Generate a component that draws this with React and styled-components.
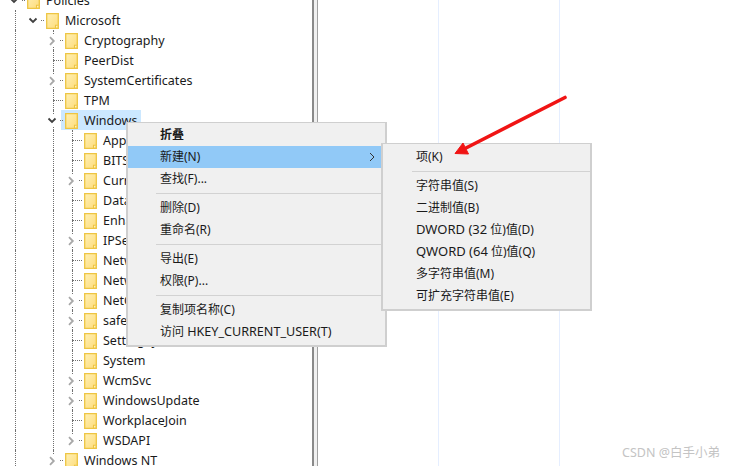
import React from 'react';
import styled, { createGlobalStyle } from 'styled-components';

const Global = createGlobalStyle`
  html, body { margin: 0; padding: 0; background: #fff; }
  body { font-family: "Noto Sans", "Noto Sans CJK SC", sans-serif; }
`;

const Page = styled.div`
  position: relative;
  width: 732px;
  height: 466px;
  overflow: hidden;
  display: flex;
  background: #fff;
`;

const TreePane = styled.div`
  width: 312px;
  flex: none;
  margin-top: -10px;
  padding-left: 15px;
  box-sizing: border-box;
`;

const Row = styled.div`
  display: flex;
  align-items: center;
  height: 20px;
`;

const Guide = styled.div`
  width: 19px;
  height: 100%;
  flex: none;
  box-sizing: border-box;
  border-left: ${p => (p.$on ? '1px dotted #707070' : 'none')};
`;

const Connector = styled.div`
  position: relative;
  width: 12px;
  height: 100%;
  flex: none;
  &::before {
    content: '';
    display: ${p => (p.$line ? 'block' : 'none')};
    position: absolute;
    left: 0;
    top: 0;
    bottom: ${p => (p.$end ? '10px' : '0')};
    border-left: 1px dotted #707070;
  }
  &::after {
    content: '';
    position: absolute;
    left: 0;
    right: 2px;
    top: 10px;
    border-top: 1px dotted #707070;
  }
`;

const Toggle = styled.svg`
  position: absolute;
  left: -6px;
  top: 4px;
  width: 12px;
  height: 12px;
  z-index: 1;
  background: #fff;
`;

const Item = styled.div`
  display: flex;
  align-items: center;
  height: 20px;
  gap: 6px;
  padding: 0 4px;
  margin-left: -4px;
  background: ${p => (p.$selected ? '#cce8ff' : 'transparent')};
`;

const FolderIcon = styled.svg`
  flex: none;
  width: 13px;
  height: 16px;
  margin-top: 2px;
`;

const Label = styled.span`
  font-size: 12.5px;
  color: #1a1a1a;
  white-space: nowrap;
`;

const Splitter = styled.div`
  width: 6px;
  flex: none;
  box-sizing: border-box;
  background: #f0f0f0;
  border-left: 2px solid #8a8a8a;
  border-right: 1px solid #a0a0a0;
`;

const ListPane = styled.div`
  flex: 1;
  display: flex;
  padding-left: 120px;
`;

const ColumnLine = styled.div`
  width: 120px;
  flex: none;
  border-left: 1px solid #e5eeff;
`;

const Menu = styled.div`
  position: absolute;
  left: ${p => p.$x}px;
  top: ${p => p.$y}px;
  width: ${p => p.$w}px;
  box-sizing: border-box;
  padding: ${p => p.$padTop}px 0 2px;
  background: #f0f0f0;
  border: 2px solid #cfcfcf;
  border-top-width: 1px;
  z-index: ${p => p.$z};
  color: #1a1a1a;
`;

const MenuItem = styled.div`
  position: relative;
  height: 22px;
  line-height: 22px;
  padding-left: ${p => p.$pad}px;
  font-size: 12px;
  font-weight: ${p => (p.$bold ? 600 : 400)};
  background: ${p => (p.$hot ? '#91c9f7' : 'transparent')};
  white-space: nowrap;
`;

const Latin = styled.span`
  font-size: ${p => p.$size}px;
  line-height: 1;
`;

const Sep = styled.div`
  height: 1px;
  margin: 3px 0 3px ${p => p.$inset}px;
  background: #d2d2d2;
`;

const SubArrow = styled.svg`
  position: absolute;
  right: 10px;
  top: 7px;
  width: 6px;
  height: 8px;
`;

const ArrowMark = styled.svg`
  position: absolute;
  left: 450px;
  top: 90px;
  width: 122px;
  height: 70px;
  z-index: 5;
`;

const Watermark = styled.div`
  position: absolute;
  right: 12px;
  bottom: 5px;
  font-size: 12.5px;
  color: #c4c4c4;
  z-index: 5;
`;

const Folder = () => (
  <FolderIcon viewBox="0 0 13 16">
    <defs>
      <linearGradient id="folderFill" x1="0" y1="0" x2="1" y2="1">
        <stop offset="0" stopColor="#fff0b4" />
        <stop offset="1" stopColor="#fddc7c" />
      </linearGradient>
    </defs>
    <path d="M.7.7h11.6v14.6H.7z" fill="url(#folderFill)" stroke="#eec542" strokeWidth="1.3" />
    <path d="M9.5 15.3v-3h2.8" fill="#fff4c8" stroke="#eec542" strokeWidth="1.1" />
  </FolderIcon>
);

const Chevron = ({ open }) => (
  <Toggle viewBox="0 0 12 12">
    {open ? (
      <path d="M1.5 4.5L5 8l3.5-3.5" fill="none" stroke="#404040" strokeWidth="1.8" />
    ) : (
      <path d="M3 3.2L6.8 7 3 10.8" fill="none" stroke="#a8a8a8" strokeWidth="1.8" />
    )}
  </Toggle>
);

const rows = [
  { level: 1, label: 'Policies', toggle: 'open' },
  { level: 2, label: 'Microsoft', toggle: 'open' },
  { level: 3, label: 'Cryptography', toggle: 'closed' },
  { level: 3, label: 'PeerDist' },
  { level: 3, label: 'SystemCertificates', toggle: 'closed' },
  { level: 3, label: 'TPM' },
  { level: 3, label: 'Windows', toggle: 'open', selected: true },
  { level: 4, label: 'AppCompat' },
  { level: 4, label: 'BITS' },
  { level: 4, label: 'CurrentVersion', toggle: 'closed' },
  { level: 4, label: 'DataCollection' },
  { level: 4, label: 'EnhancedStorage' },
  { level: 4, label: 'IPSec', toggle: 'closed' },
  { level: 4, label: 'Network Connections' },
  { level: 4, label: 'NetworkProvider' },
  { level: 4, label: 'NetCache', toggle: 'closed' },
  { level: 4, label: 'safer', toggle: 'closed' },
  { level: 4, label: 'SettingSync' },
  { level: 4, label: 'System' },
  { level: 4, label: 'WcmSvc', toggle: 'closed' },
  { level: 4, label: 'WindowsUpdate', toggle: 'closed' },
  { level: 4, label: 'WorkplaceJoin' },
  { level: 4, label: 'WSDAPI', toggle: 'closed', end: true },
  { level: 3, label: 'Windows NT', toggle: 'closed', end: true },
];

const TreeRow = ({ row }) => {
  const cols = [];
  for (let c = 0; c < row.level - 1; c += 1) cols.push(c);
  return (
    <Row>
      {cols.map(c => <Guide key={c} $on={c === 0 || c === 2} />)}
      <Connector $line={row.level >= 3} $end={row.end}>
        {row.toggle && <Chevron open={row.toggle === 'open'} />}
      </Connector>
      <Item $selected={row.selected}>
        <Folder />
        <Label>{row.label}</Label>
      </Item>
    </Row>
  );
};

export default function App() {
  return (
    <Page>
      <Global />
      <TreePane>
        {rows.map(r => <TreeRow key={r.label} row={r} />)}
      </TreePane>
      <Splitter />
      <ListPane>
        <ColumnLine />
        <ColumnLine />
      </ListPane>
      <Menu $x={126} $y={122} $w={261} $z={2} $padTop={1}>
        <MenuItem $pad={32} $bold>折叠</MenuItem>
        <MenuItem $pad={32} $hot>
          新建(N)
          <SubArrow viewBox="0 0 6 8"><path d="M1 0l4 4-4 4" fill="none" stroke="#333" strokeWidth="1" /></SubArrow>
        </MenuItem>
        <MenuItem $pad={32}>查找(F)...</MenuItem>
        <Sep $inset={28} />
        <MenuItem $pad={32}>删除(D)</MenuItem>
        <MenuItem $pad={32}>重命名(R)</MenuItem>
        <Sep $inset={28} />
        <MenuItem $pad={32}>导出(E)</MenuItem>
        <MenuItem $pad={32}>权限(P)...</MenuItem>
        <Sep $inset={28} />
        <MenuItem $pad={32}>复制项名称(C)</MenuItem>
        <MenuItem $pad={32}>访问 <Latin $size={12.6}>HKEY_CURRENT_USER(T)</Latin></MenuItem>
      </Menu>
      <Menu $x={381} $y={143} $w={211} $z={3} $padTop={2}>
        <MenuItem $pad={33}>项(K)</MenuItem>
        <Sep $inset={29} />
        <MenuItem $pad={33}>字符串值(S)</MenuItem>
        <MenuItem $pad={33}>二进制值(B)</MenuItem>
        <MenuItem $pad={33}><Latin $size={13}>DWORD (32</Latin> 位)值(D)</MenuItem>
        <MenuItem $pad={33}><Latin $size={13}>QWORD (64</Latin> 位)值(Q)</MenuItem>
        <MenuItem $pad={33}>多字符串值(M)</MenuItem>
        <MenuItem $pad={33}>可扩充字符串值(E)</MenuItem>
      </Menu>
      <ArrowMark viewBox="450 90 122 70">
        <path d="M565 97.5L466 148" stroke="#f01414" strokeWidth="3.6" strokeLinecap="round" fill="none" />
        <path d="M455 153.5L463 143L468.5 154Z" fill="#f01414" stroke="#f01414" strokeWidth="1" strokeLinejoin="round" />
      </ArrowMark>
      <Watermark>CSDN @白手小弟</Watermark>
    </Page>
  );
}
